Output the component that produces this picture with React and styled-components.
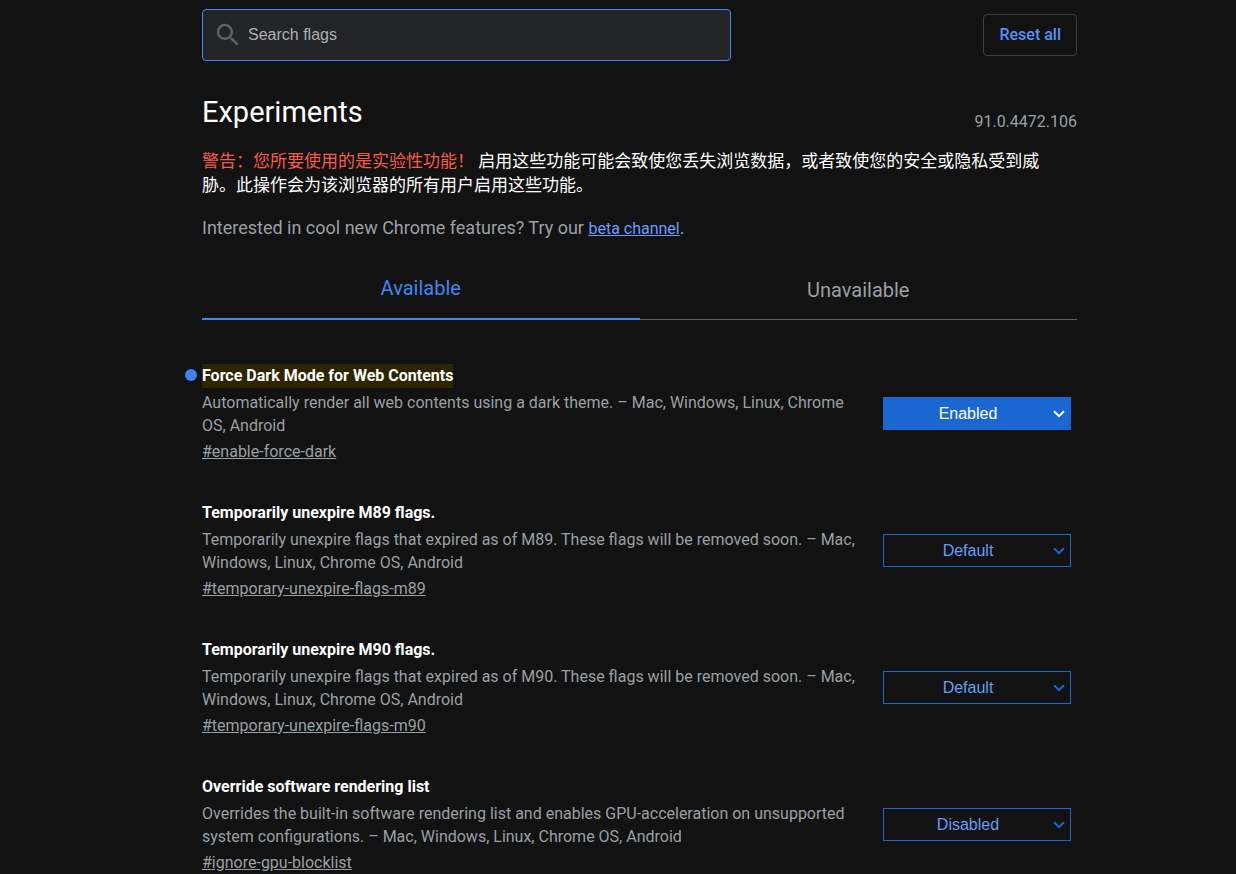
import React, { useState } from "react";
import styled, { createGlobalStyle } from "styled-components";

const flags = [
  {
    id: "enable-force-dark",
    title: "Force Dark Mode for Web Contents",
    description: "Automatically render all web contents using a dark theme. – Mac, Windows, Linux, Chrome OS, Android",
    value: "Enabled",
    highlighted: true,
  },
  {
    id: "temporary-unexpire-flags-m89",
    title: "Temporarily unexpire M89 flags.",
    description: "Temporarily unexpire flags that expired as of M89. These flags will be removed soon. – Mac, Windows, Linux, Chrome OS, Android",
    value: "Default",
  },
  {
    id: "temporary-unexpire-flags-m90",
    title: "Temporarily unexpire M90 flags.",
    description: "Temporarily unexpire flags that expired as of M90. These flags will be removed soon. – Mac, Windows, Linux, Chrome OS, Android",
    value: "Default",
  },
  {
    id: "ignore-gpu-blocklist",
    title: "Override software rendering list",
    description: "Overrides the built-in software rendering list and enables GPU-acceleration on unsupported system configurations. – Mac, Windows, Linux, Chrome OS, Android",
    value: "Disabled",
  },
];

function Flag({ flag }) {
  const [value, setValue] = useState(flag.value);
  const changed = flag.highlighted && value !== "Default";

  return (
    <FlagRow>
      <FlagText>
        <FlagTitle id={`${flag.id}-name`}>
          {changed && <ChangedDot />}
          <TitleText $highlighted={flag.highlighted}>{flag.title}</TitleText>
        </FlagTitle>
        <Description>{flag.description}</Description>
        <Permalink href={`#${flag.id}`}>#{flag.id}</Permalink>
      </FlagText>
      <SelectWrap>
        <Select
          aria-labelledby={`${flag.id}-name`}
          value={value}
          $filled={changed}
          onChange={(e) => setValue(e.target.value)}
        >
          <option>Default</option>
          <option>Enabled</option>
          <option>Disabled</option>
        </Select>
        <Chevron viewBox="0 0 12 8" $filled={changed} aria-hidden="true">
          <path d="M1 1.2L6 6.2L11 1.2" />
        </Chevron>
      </SelectWrap>
    </FlagRow>
  );
}

function App() {
  const [query, setQuery] = useState("");
  const [tab, setTab] = useState("available");

  return (
    <>
      <GlobalStyle />
      <Page>
        <Content>
          <Header>
            <SearchBox>
              <SearchIcon viewBox="0 0 24 24" aria-hidden="true">
                <path d="M15.5 14h-.79l-.28-.27A6.471 6.471 0 0 0 16 9.5 6.5 6.5 0 1 0 9.5 16c1.61 0 3.09-.59 4.23-1.57l.27.28v.79l5 4.99L20.49 19l-4.99-5zm-6 0C7.01 14 5 11.99 5 9.5S7.01 5 9.5 5 14 7.01 14 9.5 11.99 14 9.5 14z" />
              </SearchIcon>
              <SearchInput
                type="text"
                placeholder="Search flags"
                aria-label="Search flags"
                value={query}
                onChange={(e) => setQuery(e.target.value)}
              />
            </SearchBox>
            <ResetButton>Reset all</ResetButton>
          </Header>

          <TitleRow>
            <Title>Experiments</Title>
            <Version>91.0.4472.106</Version>
          </TitleRow>

          <Blurb lang="zh-CN">
            <Warning>警告：您所要使用的是实验性功能！</Warning>{" "}
            启用这些功能可能会致使您丢失浏览数据，或者致使您的安全或隐私受到威胁。此操作会为该浏览器的所有用户启用这些功能。
          </Blurb>
          <Promo>
            Interested in cool new Chrome features? Try our <PromoLink href="#beta">beta channel</PromoLink>.
          </Promo>

          <Tabs role="tablist">
            <Tab role="tab" aria-selected={tab === "available"} $active={tab === "available"} onClick={() => setTab("available")}>
              Available
            </Tab>
            <Tab role="tab" aria-selected={tab === "unavailable"} $active={tab === "unavailable"} onClick={() => setTab("unavailable")}>
              Unavailable
            </Tab>
          </Tabs>

          {tab === "available" && (
            <FlagList>
              {flags
                .filter((flag) => flag.title.toLowerCase().includes(query.toLowerCase()))
                .map((flag) => (
                  <Flag key={flag.id} flag={flag} />
                ))}
            </FlagList>
          )}
        </Content>
      </Page>
    </>
  );
}

export default App;

const GlobalStyle = createGlobalStyle`
  * {
    box-sizing: border-box;
  }

  html {
    background-color: #121212;
    scrollbar-width: none;
  }

  body {
    margin: 0;
    color: #9aa0a6;
    font-family: Roboto, "Noto Sans CJK SC", sans-serif;
    font-size: 16px;
    line-height: 23px;
  }
`;

const Page = styled.main`
  padding: 9px 0 0 43px;
`;

const Content = styled.div`
  max-width: 875px;
  margin: 0 auto;
`;

const Header = styled.div`
  display: flex;
  align-items: center;
  justify-content: space-between;
`;

const SearchBox = styled.label`
  display: flex;
  align-items: center;
  flex: 0 1 529px;
  height: 52px;
  padding: 0 10px;
  border: 1px solid #4285f4;
  border-radius: 4px;
  background-color: #232427;
`;

const SearchIcon = styled.svg`
  flex: none;
  width: 30px;
  height: 30px;
  fill: #5f6368;
`;

const SearchInput = styled.input`
  flex: 1;
  min-width: 0;
  padding: 0 5px;
  border: none;
  outline: none;
  background: transparent;
  color: #e8eaed;
  font-family: "Liberation Sans", Arial, sans-serif;
  font-size: 16px;

  &::placeholder {
    color: #b0b0b0;
  }
`;

const ResetButton = styled.button`
  height: 42px;
  padding: 0 15px 2px;
  border: 1px solid #3c4043;
  border-radius: 4px;
  background: transparent;
  color: #5691f7;
  font-family: Roboto, sans-serif;
  font-size: 16px;
  font-weight: 500;
  cursor: pointer;
`;

const TitleRow = styled.div`
  display: flex;
  align-items: flex-end;
  justify-content: space-between;
  margin-top: 30px;
`;

const Title = styled.h1`
  margin: 0;
  color: white;
  font-size: 29px;
  font-weight: 400;
  line-height: 42px;
`;

const Version = styled.span`
  white-space: nowrap;
`;

const Blurb = styled.p`
  margin: 16px 0 0;
  padding-right: 24px;
  color: white;
  font-size: 17px;
  line-height: 24px;
`;

const Warning = styled.span`
  color: #f85a47;
`;

const Promo = styled.p`
  margin: 19px 0 0;
  font-size: 18px;
  line-height: 24px;
`;

const PromoLink = styled.a`
  color: #6a9cff;
  font-size: 16px;
`;

const Tabs = styled.div`
  display: flex;
  margin-top: 15px;
`;

const Tab = styled.button`
  flex: 1;
  height: 64px;
  padding: ${({ $active }) => ($active ? "2px 0 0" : "4px 0 0")};
  border: none;
  border-bottom: ${({ $active }) => ($active ? "2px solid #4285f4" : "1px solid #5f6063")};
  background: transparent;
  color: ${({ $active }) => ($active ? "#4285f4" : "#9aa0a6")};
  font-family: Roboto, sans-serif;
  font-size: 20px;
  cursor: pointer;
`;

const FlagList = styled.div`
  display: flex;
  flex-direction: column;
  gap: 38px;
  padding: 44px 6px 37px 0;
`;

const FlagRow = styled.div`
  display: flex;
  align-items: center;
  justify-content: space-between;
  gap: 15px;
`;

const FlagText = styled.div`
  flex: 1;
`;

const FlagTitle = styled.h2`
  position: relative;
  margin: 0 0 3px;
  color: white;
  font-size: 16px;
  font-weight: 700;
  line-height: 24px;
`;

const ChangedDot = styled.span`
  position: absolute;
  top: 5px;
  left: -17px;
  width: 12px;
  height: 12px;
  border-radius: 50%;
  background-color: #3f82f0;
`;

const TitleText = styled.span`
  display: inline-block;
  background-color: ${({ $highlighted }) => ($highlighted ? "#2d2500" : "transparent")};
`;

const Description = styled.p`
  margin: 0 0 3px;
`;

const Permalink = styled.a`
  display: inline-block;
  vertical-align: top;
  color: inherit;
`;

const SelectWrap = styled.div`
  position: relative;
  flex: none;
  width: 188px;
`;

const Select = styled.select`
  display: block;
  appearance: none;
  width: 100%;
  height: 33px;
  padding: 0 20px 0 2px;
  border: 1px solid #1a67d2;
  border-radius: 0;
  background-color: ${({ $filled }) => ($filled ? "#1a67d2" : "#121212")};
  color: ${({ $filled }) => ($filled ? "white" : "#669df6")};
  font-family: "Liberation Sans", Arial, sans-serif;
  font-size: 16px;
  text-align: center;
  text-align-last: center;
  cursor: pointer;
`;

const Chevron = styled.svg`
  position: absolute;
  top: 13px;
  right: 6px;
  width: 12px;
  height: 8px;
  fill: none;
  stroke: ${({ $filled }) => ($filled ? "white" : "#1a67d2")};
  stroke-width: 2;
  pointer-events: none;
`;
